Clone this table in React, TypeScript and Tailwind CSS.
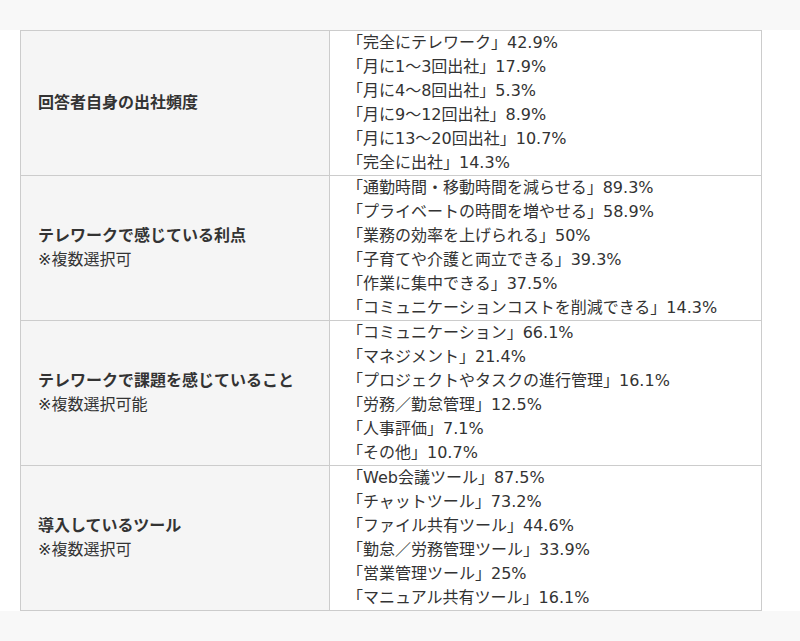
const rows: { label: string; note?: string; items: string[] }[] = [
  {
    label: "回答者自身の出社頻度",
    items: [
      "「完全にテレワーク」42.9%",
      "「月に1〜3回出社」17.9%",
      "「月に4〜8回出社」5.3%",
      "「月に9〜12回出社」8.9%",
      "「月に13〜20回出社」10.7%",
      "「完全に出社」14.3%",
    ],
  },
  {
    label: "テレワークで感じている利点",
    note: "※複数選択可",
    items: [
      "「通勤時間・移動時間を減らせる」89.3%",
      "「プライベートの時間を増やせる」58.9%",
      "「業務の効率を上げられる」50%",
      "「子育てや介護と両立できる」39.3%",
      "「作業に集中できる」37.5%",
      "「コミュニケーションコストを削減できる」14.3%",
    ],
  },
  {
    label: "テレワークで課題を感じていること",
    note: "※複数選択可能",
    items: [
      "「コミュニケーション」66.1%",
      "「マネジメント」21.4%",
      "「プロジェクトやタスクの進行管理」16.1%",
      "「労務／勤怠管理」12.5%",
      "「人事評価」7.1%",
      "「その他」10.7%",
    ],
  },
  {
    label: "導入しているツール",
    note: "※複数選択可",
    items: [
      "「Web会議ツール」87.5%",
      "「チャットツール」73.2%",
      "「ファイル共有ツール」44.6%",
      "「勤怠／労務管理ツール」33.9%",
      "「営業管理ツール」25%",
      "「マニュアル共有ツール」16.1%",
    ],
  },
];

export default function App() {
  return (
    <div
      className="w-[800px] bg-white text-[16px] leading-[24px] text-[#333]"
      style={{ fontFamily: '"DejaVu Sans", "Noto Sans CJK JP", sans-serif' }}
    >
      <div className="h-[30px] bg-[#f8f8f8]" />
      <div className="ml-5 w-[742px] border border-[#cccccc]">
        {rows.map((row, i) => (
          <div
            key={row.label}
            className={`flex ${i > 0 ? "border-t border-[#cccccc]" : ""}`}
          >
            <div className="w-[309px] shrink-0 border-r border-[#cccccc] bg-[#f5f5f5] pl-[17px] flex flex-col justify-center">
              <p className="font-bold">{row.label}</p>
              {row.note && <p>{row.note}</p>}
            </div>
            <div className="pl-[17px]">
              {row.items.map((item) => (
                <p key={item}>{item}</p>
              ))}
            </div>
          </div>
        ))}
      </div>
      <div className="h-[30px] bg-[#f8f8f8]" />
    </div>
  );
}
